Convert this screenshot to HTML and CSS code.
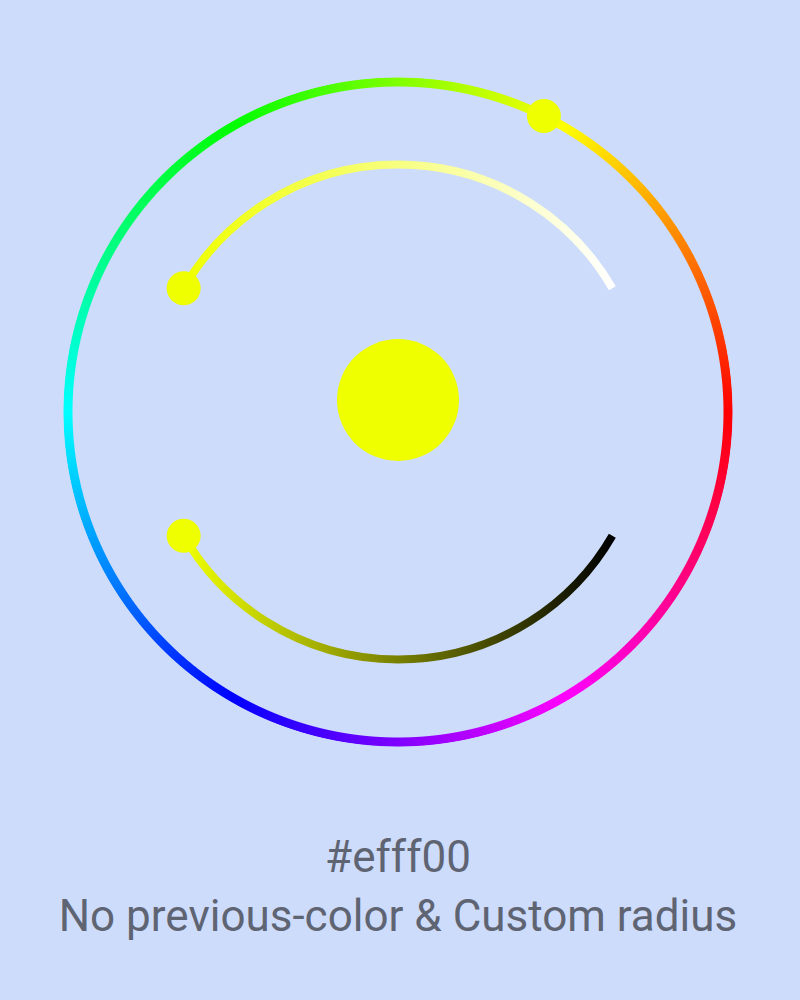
FILE: index.html
```html
<!DOCTYPE html>
<html>
<head>
<meta charset="utf-8">
<link rel="stylesheet" href="styles.css">
</head>
<body>
<div class="picker">
  <div class="hue-ring"></div>
  <svg class="overlay" width="800" height="824" viewBox="0 0 800 824">
    <defs>
      <linearGradient id="sat" gradientUnits="userSpaceOnUse" x1="183.66" y1="0" x2="612.34" y2="0">
        <stop offset="0" stop-color="#efff00"/>
        <stop offset="1" stop-color="#ffffff"/>
      </linearGradient>
      <linearGradient id="val" gradientUnits="userSpaceOnUse" x1="183.66" y1="0" x2="612.34" y2="0">
        <stop offset="0" stop-color="#efff00"/>
        <stop offset="1" stop-color="#000000"/>
      </linearGradient>
    </defs>
    <path d="M 183.66 288.25 A 247.5 247.5 0 0 1 612.34 288.25" fill="none" stroke="url(#sat)" stroke-width="8"/>
    <path d="M 183.66 535.75 A 247.5 247.5 0 0 0 612.34 535.75" fill="none" stroke="url(#val)" stroke-width="8"/>
    <circle cx="183.66" cy="288.25" r="17" fill="#efff00"/>
    <circle cx="183.66" cy="535.75" r="17" fill="#efff00"/>
    <circle cx="543.9" cy="116" r="17" fill="#efff00"/>
    <circle cx="398" cy="400" r="61" fill="#efff00"/>
  </svg>
</div>
<div class="label">
  <div class="label-line">#efff00</div>
  <div class="label-line">No previous-color &amp; Custom radius</div>
</div>
</body>
</html>
```
FILE: styles.css
```css
html, body {
  margin: 0;
  padding: 0;
  background: #cddcfb;
}
body {
  width: 800px;
  height: 1000px;
  overflow: hidden;
  font-family: Roboto, "Liberation Sans", sans-serif;
}
.picker {
  position: relative;
  width: 800px;
  height: 824px;
  display: flow-root;
}
.hue-ring {
  width: 670px;
  height: 670px;
  margin: 77px 0 0 63px;
  border-radius: 50%;
  background: conic-gradient(
    #80ff00 0deg,
    #ffff00 30deg,
    #ff0000 90deg,
    #ff00ff 150deg,
    #0000ff 210deg,
    #00ffff 270deg,
    #00ff00 330deg,
    #80ff00 360deg
  );
  -webkit-mask: radial-gradient(closest-side, transparent 325px, #000 326px, #000 334px, transparent 335px);
  mask: radial-gradient(closest-side, transparent 325px, #000 326px, #000 334px, transparent 335px);
}
.overlay {
  position: absolute;
  left: 0;
  top: 0;
}
.label {
  width: 796px;
  padding-top: 4px;
  text-align: center;
  color: #5f6473;
  font-size: 44px;
  line-height: 59px;
}
```
